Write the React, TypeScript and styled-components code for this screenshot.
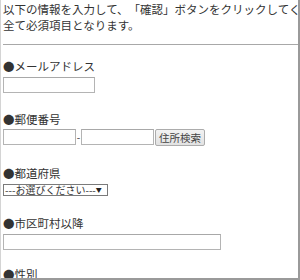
import React from "react";
import styled, { createGlobalStyle } from "styled-components";

const Global = createGlobalStyle`
  html, body { margin: 0; padding: 0; background: #fff; }
  body {
    font-family: "Noto Sans CJK JP", "Noto Sans", sans-serif;
    color: #333;
    text-spacing-trim: space-all;
  }
`;

const Frame = styled.div`
  box-sizing: border-box;
  width: 300px;
  height: 280px;
  overflow: hidden;
  border-left: 1px solid #d4d4d4;
  border-right: 2px solid #9a9a9a;
  border-bottom: 2px solid #9a9a9a;
  padding: 1px 0 0 2px;
  font-size: 11.5px;
  line-height: 16px;
  text-spacing-trim: space-all;
`;

const Intro = styled.p`
  margin: 0;
  white-space: nowrap;
`;

const Rule = styled.hr`
  margin: 11px 0 13px 0;
  border: 0;
  border-top: 1px solid #a8a8a8;
  height: 0;
`;

const Block = styled.div<{ $after: number }>`
  display: flex;
  flex-direction: column;
  align-items: flex-start;
  gap: 3px;
  margin-bottom: ${(p) => p.$after}px;
`;

const Label = styled.div`
  height: 16px;
  line-height: 16px;
  white-space: nowrap;
`;

const Input = styled.input<{ $w: number }>`
  box-sizing: border-box;
  width: ${(p) => p.$w}px;
  height: 16px;
  margin: 0;
  padding: 0 2px;
  border: 1px solid #b4b4b4;
  border-top-color: #a8a8a8;
  background: #fff;
  font-size: 10px;
`;

const ZipRow = styled.div`
  display: flex;
  align-items: center;
  height: 16px;
  margin-top: -1px;
`;

const Dash = styled.span`
  width: 5px;
  text-align: center;
  font-size: 10px;
  line-height: 16px;
`;

const Button = styled.button`
  box-sizing: border-box;
  height: 17px;
  width: 50px;
  margin: 0 0 0 1px;
  padding: 0;
  border: 1px solid #acacac;
  border-radius: 2px;
  background: linear-gradient(#f2f2f2, #e2e2e2);
  color: #444;
  font-family: inherit;
  font-size: 10.5px;
  line-height: 15px;
`;

const SelectBox = styled.div`
  box-sizing: border-box;
  display: flex;
  align-items: center;
  justify-content: space-between;
  width: 105px;
  height: 12px;
  padding: 0 6px 0 1px;
  border: 1px solid #7a7a7a;
  background: #fff;
  font-size: 10px;
  line-height: 10px;
  color: #333;
  white-space: nowrap;
`;

const Arrow = styled.span`
  font-size: 6px;
  line-height: 6px;
  color: #222;
`;

export default function App() {
  return (
    <>
      <Global />
      <Frame>
        <Intro>以下の情報を入力して、「確認」ボタンをクリックしてください。</Intro>
        <Intro>全て必須項目となります。</Intro>
        <Rule />
        <Block $after={18}>
          <Label>●メールアドレス</Label>
          <Input $w={92} />
        </Block>
        <Block $after={20}>
          <Label>●郵便番号</Label>
          <ZipRow>
            <Input $w={73} />
            <Dash>-</Dash>
            <Input $w={73} />
            <Button>住所検索</Button>
          </ZipRow>
        </Block>
        <Block $after={19}>
          <Label>●都道府県</Label>
          <SelectBox>
            <span>---お選びください---</span>
            <Arrow>▼</Arrow>
          </SelectBox>
        </Block>
        <Block $after={16}>
          <Label>●市区町村以降</Label>
          <Input $w={218} />
        </Block>
        <Block $after={16}>
          <Label>●性別</Label>
        </Block>
      </Frame>
    </>
  );
}
